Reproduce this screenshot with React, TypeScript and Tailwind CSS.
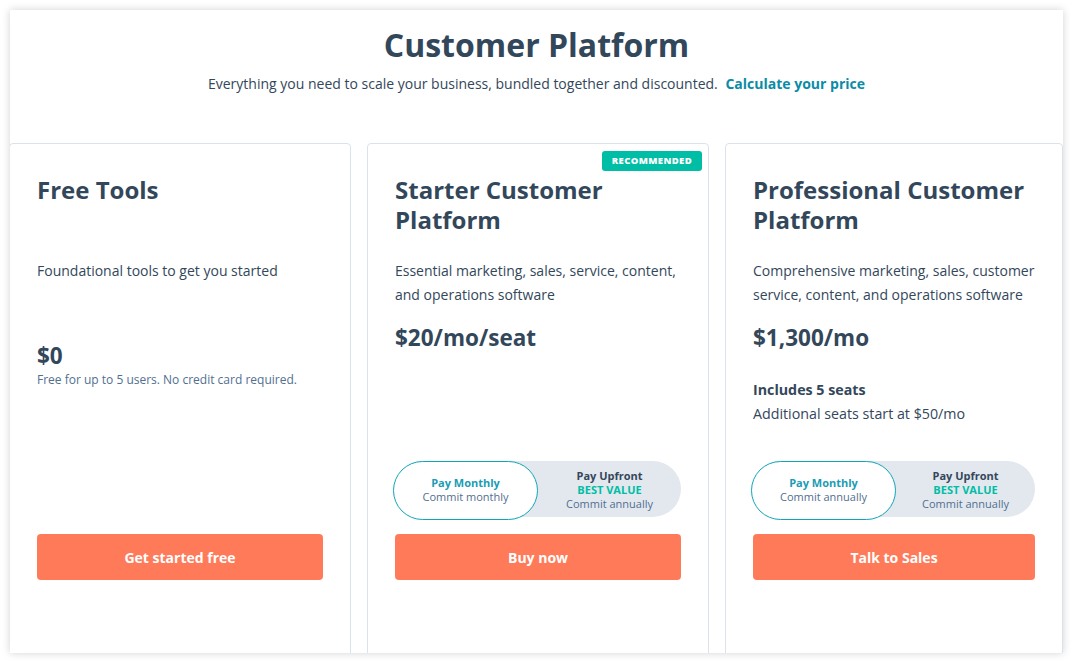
import React from 'react';

interface Plan {
  name: string;
  description: string;
  price: string;
  note?: string;
  seats?: { title: string; extra: string };
  toggle?: { monthly: string };
  recommended?: boolean;
  cta: string;
}

const plans: Plan[] = [
  {
    name: 'Free Tools',
    description: 'Foundational tools to get you started',
    price: '$0',
    note: 'Free for up to 5 users. No credit card required.',
    cta: 'Get started free',
  },
  {
    name: 'Starter Customer Platform',
    description: 'Essential marketing, sales, service, content, and operations software',
    price: '$20/mo/seat',
    toggle: { monthly: 'Commit monthly' },
    recommended: true,
    cta: 'Buy now',
  },
  {
    name: 'Professional Customer Platform',
    description: 'Comprehensive marketing, sales, customer service, content, and operations software',
    price: '$1,300/mo',
    seats: { title: 'Includes 5 seats', extra: 'Additional seats start at $50/mo' },
    toggle: { monthly: 'Commit annually' },
    cta: 'Talk to Sales',
  },
];

const BillingToggle: React.FC<{ monthly: string }> = ({ monthly }) => (
  <div className="flex h-[59px] items-center">
    <div className="grid h-[56px] w-full grid-cols-[143px_1fr] items-center rounded-full bg-[#e3e8ef]">
      <div className="-ml-[2px] flex h-[59px] w-[145px] flex-col items-center justify-center rounded-full border border-[#0fa5b9] bg-white text-[11px] leading-[14px]">
        <span className="font-bold text-[#1b9cb4]">Pay Monthly</span>
        <span className="text-[#516f90]">{monthly}</span>
      </div>
      <div className="flex flex-col items-center justify-center text-[11px] leading-[14px]">
        <span className="font-bold text-[#33475b]">Pay Upfront</span>
        <span className="font-bold text-[#00bda5]">BEST VALUE</span>
        <span className="text-[#516f90]">Commit annually</span>
      </div>
    </div>
  </div>
);

const PlanCard: React.FC<{ plan: Plan; first?: boolean }> = ({ plan, first }) => (
  <div className="relative flex h-[530px] flex-col rounded-t-[4px] border border-[#dbe2ec] px-[27px] pt-[31px] pb-[92px]">
    {plan.recommended && (
      <span className="absolute top-[7px] right-[6px] flex h-[20px] items-center rounded-[3px] bg-[#00bda5] px-[10px] text-[9.5px] font-extrabold tracking-[0.04em] text-white">
        RECOMMENDED
      </span>
    )}
    <h2 className="min-h-[60px] text-[24px] leading-[30px] font-bold text-[#33475b]">{plan.name}</h2>
    <p className="mt-[24px] min-h-[48px] text-[14px] leading-[24px] text-[#33475b]">{plan.description}</p>
    <div className={first ? 'mt-[34px]' : 'mt-[16px]'}>
      <div className="text-[22.5px] leading-[30px] font-bold text-[#33475b]">{plan.price}</div>
      {plan.note && <p className="text-[12px] leading-[18px] text-[#516f90]">{plan.note}</p>}
      {plan.seats && (
        <div className="mt-[25px] text-[14.25px] leading-[24px] text-[#33475b]">
          <p className="font-bold">{plan.seats.title}</p>
          <p>{plan.seats.extra}</p>
        </div>
      )}
    </div>
    <div className="mt-auto">
      {plan.toggle && (
        <div className="mb-[16px]">
          <BillingToggle monthly={plan.toggle.monthly} />
        </div>
      )}
      <button className="flex h-[46px] w-full items-center justify-center rounded-[4px] bg-[#ff7a59] text-[14px] font-bold text-white">
        {plan.cta}
      </button>
    </div>
  </div>
);

export default function App() {
  return (
    <div className="min-h-screen bg-white p-[10px]" style={{ fontFamily: '"Open Sans", "Noto Sans", sans-serif' }}>
      <div className="h-[643px] overflow-hidden bg-white shadow-[0_0_8px_rgba(0,0,0,0.18)]">
        <header className="pt-[15px] text-center">
          <h1 className="text-[32px] leading-[40px] font-bold text-[#33475b]">Customer Platform</h1>
          <p className="mt-[9px] text-[14px] leading-[20px] text-[#33475b]">
            Everything you need to scale your business, bundled together and discounted.{' '}
            <a className="ml-[4px] font-bold text-[#0b8ba5]" href="#">Calculate your price</a>
          </p>
        </header>
        <div className="mt-[49px] -ml-px grid grid-cols-[342px_342px_1fr] gap-[16px]">
          {plans.map((p, i) => (
            <PlanCard key={p.name} plan={p} first={i === 0} />
          ))}
        </div>
      </div>
    </div>
  );
}
